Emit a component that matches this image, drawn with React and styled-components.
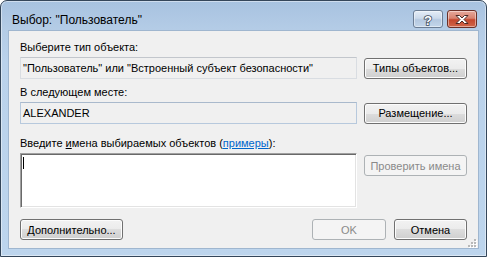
import React from "react";
import styled, { createGlobalStyle } from "styled-components";

const GlobalStyle = createGlobalStyle`
  html, body { margin: 0; padding: 0; background: #ffffff; }
  body {
    font-family: "Liberation Sans", Arial, sans-serif;
    font-size: 11px;
    color: #000;
  }
  * { box-sizing: border-box; }
`;

const Window = styled.div`
  width: 487px;
  height: 257px;
  border: 1px solid #34465a;
  border-radius: 7px 7px 0 0;
  background: linear-gradient(#a7c2e0 0px, #b4cce6 28px, #bad2eb 60px, #bdd5ed 100%);
  box-shadow: inset 0 0 0 1px rgba(255, 255, 255, 0.45);
  display: flex;
  flex-direction: column;
`;

const TitleBar = styled.div`
  height: 29px;
  display: flex;
  align-items: flex-start;
  padding: 0 9px 0 11px;
`;

const Title = styled.div`
  flex: 1;
  padding-top: 11px;
  font-size: 12px;
  line-height: 16px;
  color: #000;
`;

const CaptionButtons = styled.div`
  display: flex;
  gap: 4px;
  padding-top: 9px;
`;

const CaptionButton = styled.div`
  width: 30px;
  height: 18px;
  border-radius: 3px;
  border: 1px solid ${(p) => (p.$close ? "#6b3027" : "#6b7d94")};
  background: ${(p) =>
    p.$close
      ? "linear-gradient(#e6a99c 0%, #d88370 45%, #c4472d 55%, #d0664a 100%)"
      : "linear-gradient(#e4edf7 0%, #ccdaeb 45%, #b4c8e0 55%, #c3d6ea 100%)"};
  box-shadow: inset 0 0 0 1px rgba(255, 255, 255, 0.45);
  display: flex;
  align-items: center;
  justify-content: center;
`;

const Client = styled.div`
  position: relative;
  flex: 1;
  margin: 0 7px 7px 7px;
  border: 1px solid #9fb6cf;
  background: #f0f0f0;
  padding: 8px 11px 8px 11px;
  display: flex;
  flex-direction: column;
`;

const Label = styled.div`
  line-height: 16px;
  margin-top: ${(p) => p.$top || 0}px;
  margin-bottom: 2px;
  white-space: nowrap;
`;

const Row = styled.div`
  display: flex;
  align-items: ${(p) => (p.$top ? "flex-start" : "center")};
  gap: 7px;
`;

const Field = styled.div`
  width: 337px;
  height: 22px;
  line-height: 20px;
  padding: 0 2px;
  background: #f0f0f0;
  border: 1px solid ${(p) => (p.$blue ? "#b7c9dd" : "#d9dde2")};
  border-top-color: ${(p) => (p.$blue ? "#a9b9cc" : "#c2c6cc")};
  white-space: nowrap;
  overflow: hidden;
`;

const TextArea = styled.div`
  position: relative;
  width: 337px;
  height: 55px;
  background: #fff;
  border-style: solid;
  border-width: 1px;
  border-color: #a0a0a0 #ffffff #ffffff #a0a0a0;
  box-shadow: inset 1px 1px 0 #696969, inset -1px -1px 0 #e3e3e3;
`;

const Caret = styled.div`
  position: absolute;
  left: 2px;
  top: 3px;
  width: 1px;
  height: 12px;
  background: #000;
`;

const Button = styled.div`
  width: ${(p) => p.$w || 103}px;
  height: 21px;
  border-radius: 3px;
  border: 1px solid ${(p) => (p.$disabled ? "#adb2b5" : "#707070")};
  background: ${(p) =>
    p.$disabled
      ? "#f4f4f4"
      : "linear-gradient(#f2f2f2 0%, #ebebeb 50%, #dddddd 50%, #cfcfcf 100%)"};
  box-shadow: inset 0 0 0 1px ${(p) => (p.$disabled ? "#f4f4f4" : "#fcfcfc")};
  color: ${(p) => (p.$disabled ? "#8a8a8a" : "#000")};
  display: flex;
  align-items: center;
  justify-content: center;
  line-height: 16px;
  white-space: nowrap;
  margin-top: ${(p) => p.$mt || 0}px;
`;

const Footer = styled.div`
  display: flex;
  align-items: center;
  margin-top: 11px;
`;

const Spacer = styled.div`
  flex: 1;
`;

const FooterRight = styled.div`
  display: flex;
  gap: 8px;
`;

const Link = styled.span`
  color: #0066cc;
  text-decoration: underline;
`;

const Key = styled.span`
  text-decoration: underline;
`;

const Grip = styled.svg`
  position: absolute;
  right: 1px;
  bottom: 0px;
`;

const HelpGlyph = () => (
  <svg width="12" height="13" viewBox="0 0 12 13">
    <text
      x="6"
      y="11.5"
      textAnchor="middle"
      fontFamily="Liberation Sans, sans-serif"
      fontWeight="bold"
      fontSize="13"
      fill="#fff"
      stroke="#3d4b5c"
      strokeWidth="1.6"
      paintOrder="stroke"
    >
      ?
    </text>
  </svg>
);

const CloseGlyph = () => (
  <svg width="16" height="11" viewBox="0 0 16 11">
    <path
      d="M2 1.5 L5.5 1.5 L8 4 L10.5 1.5 L14 1.5 L10 5.5 L14 9.5 L10.5 9.5 L8 7 L5.5 9.5 L2 9.5 L6 5.5 Z"
      fill="#fff"
      stroke="#4a2a26"
      strokeWidth="1"
      strokeLinejoin="round"
    />
  </svg>
);

const ResizeGrip = () => (
  <Grip width="10" height="9" viewBox="0 0 10 9">
    {[
      [7, 0],
      [4, 3],
      [7, 3],
      [1, 6],
      [4, 6],
      [7, 6],
    ].map(([x, y]) => (
      <g key={`${x}-${y}`}>
        <rect x={x + 1} y={y + 1} width="2" height="2" fill="#ffffff" />
        <rect x={x} y={y} width="2" height="2" fill="#b8b8b8" />
      </g>
    ))}
  </Grip>
);

export default function App() {
  return (
    <>
      <GlobalStyle />
      <Window>
        <TitleBar>
          <Title>Выбор: "Пользователь"</Title>
          <CaptionButtons>
            <CaptionButton>
              <HelpGlyph />
            </CaptionButton>
            <CaptionButton $close>
              <CloseGlyph />
            </CaptionButton>
          </CaptionButtons>
        </TitleBar>
        <Client>
          <Label>Выберите тип объекта:</Label>
          <Row>
            <Field>"Пользователь" или "Встроенный субъект безопасности"</Field>
            <Button>Типы объектов...</Button>
          </Row>
          <Label $top={5}>В следующем месте:</Label>
          <Row>
            <Field $blue>ALEXANDER</Field>
            <Button>Размещение...</Button>
          </Row>
          <Label $top={11}>
            Введите <Key>и</Key>мена выбираемых объектов (<Link>примеры</Link>):
          </Label>
          <Row $top>
            <TextArea>
              <Caret />
            </TextArea>
            <Button $disabled $mt={2}>
              Проверить имена
            </Button>
          </Row>
          <Footer>
            <Button>Дополнительно...</Button>
            <Spacer />
            <FooterRight>
              <Button $w={74} $disabled>
                OK
              </Button>
              <Button $w={73}>Отмена</Button>
            </FooterRight>
          </Footer>
          <ResizeGrip />
        </Client>
      </Window>
    </>
  );
}
